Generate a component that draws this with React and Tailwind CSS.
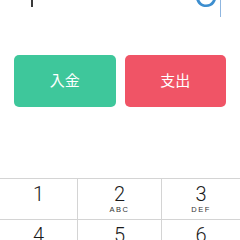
const KEYS = [
  { n: '1', s: '' },
  { n: '2', s: 'ABC' },
  { n: '3', s: 'DEF' },
  { n: '4', s: 'GHI' },
  { n: '5', s: 'JKL' },
  { n: '6', s: 'MNO' },
];

export default function App() {
  return (
    <div className="w-[240px] h-[240px] overflow-hidden bg-white" style={{ fontFamily: '"Helvetica Neue", "Liberation Sans", "Noto Sans CJK JP", sans-serif' }}>
      {/* amount display, scrolled up */}
      <div className="h-[55px] relative overflow-hidden">
        <div className="absolute left-[31px] top-0 w-[2px] h-[7px] bg-[#3a3a3a]" />
        <div className="absolute right-[19px] top-[-35px] flex items-start">
          <span className="text-[50px] leading-[50px] font-light text-[#3d8ecf] font-['Roboto',sans-serif]">0</span>
          <div className="w-px h-[52px] bg-[#8fb6e0]" />
        </div>
      </div>

      {/* buttons */}
      <div className="flex gap-[9px] px-[14px]">
        <button className="flex-1 h-[52px] rounded-[5px] bg-[#3ec79b] text-white text-[15px]">入金</button>
        <button className="flex-1 h-[52px] rounded-[5px] bg-[#f05466] text-white text-[15px]">支出</button>
      </div>

      {/* keypad */}
      <div className="mt-[71px] border-t border-[#d4d4d4] grid grid-cols-[78px_84px_78px]">
        {KEYS.map((k, i) => (
          <div
            key={k.n}
            className={`h-[41px] flex flex-col items-center pt-[4px] border-b border-[#d4d4d4] ${i % 3 !== 2 ? 'border-r' : ''}`}
          >
            <span className="text-[20px] leading-[22px] font-light text-[#1a1a1a] font-['Roboto',sans-serif]">{k.n}</span>
            <span className="text-[7.5px] leading-[9px] tracking-[1.5px] text-[#333]">{k.s}</span>
          </div>
        ))}
      </div>
    </div>
  );
}
